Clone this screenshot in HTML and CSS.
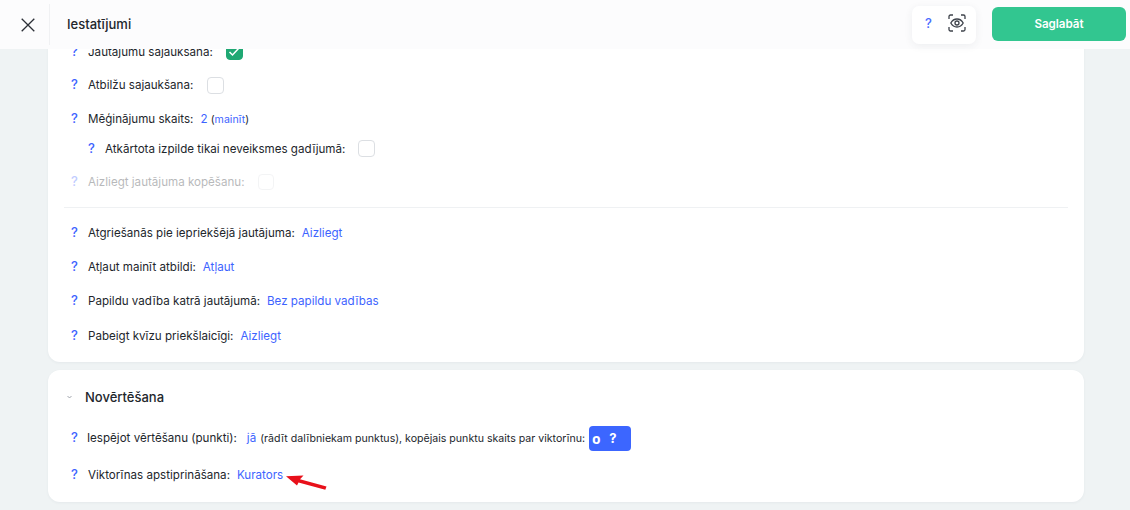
FILE: index.html
```html
<!DOCTYPE html>
<html lang="lv">
<head>
<meta charset="utf-8">
<title>Iestatījumi</title>
<link rel="stylesheet" href="styles.css">
</head>
<body>
<header class="topbar">
  <button class="close" aria-label="Aizvērt">
    <svg width="14" height="14" viewBox="0 0 14 14"><path d="M.7 .7l12.600 12.600M13.300 .7L.7 13.300" stroke="#2b2f36" stroke-width="1.300" fill="none"/></svg>
  </button>
  <div class="title">Iestatījumi</div>
  <div class="tools">
    <span class="q">?</span>
    <svg width="18" height="18" viewBox="0 0 18 18" fill="none" stroke="#3e434b" stroke-width="1.300"><path d="M1 5V2.500A1.500 1.500 0 0 1 2.500 1H5M13 1h2.500A1.500 1.500 0 0 1 17 2.500V5M17 13v2.500a1.500 1.500 0 0 1-1.500 1.500H13M5 17H2.500A1.500 1.500 0 0 1 1 15.500V13"/><path d="M2.800 9C4.300 6.300 6.500 5 9 5s4.700 1.300 6.200 4c-1.500 2.700-3.700 4-6.200 4S4.300 11.700 2.800 9z"/><circle cx="9" cy="9" r="2"/></svg>
  </div>
  <button class="save">Saglabāt</button>
</header>
<main class="content">
  <section class="card card-settings">
    <div class="row row-first"><span class="q">?</span><span>Jautājumu sajaukšana:</span><span class="check on"><svg width="12" height="10" viewBox="0 0 12 10"><path d="M1.500 5l3 3 6-6.500" stroke="#fff" stroke-width="1.500" fill="none"/></svg></span></div>
    <div class="row"><span class="q">?</span><span>Atbilžu sajaukšana:</span><span class="check check-wide"></span></div>
    <div class="row row-tries"><span class="q">?</span><span>Mēģinājumu skaits:</span><span><a class="link">2</a> <span class="small">(<a class="link">mainīt</a>)</span></span></div>
    <div class="row row-sub"><span class="q">?</span><span>Atkārtota izpilde tikai neveiksmes gadījumā:</span><span class="check"></span></div>
    <div class="row row-disabled"><span class="q">?</span><span>Aizliegt jautājuma kopēšanu:</span><span class="check check-small"></span></div>
    <hr class="divider">
    <div class="row"><span class="q">?</span><span>Atgriešanās pie iepriekšējā jautājuma:</span><a class="link">Aizliegt</a></div>
    <div class="row"><span class="q">?</span><span>Atļaut mainīt atbildi:</span><a class="link">Atļaut</a></div>
    <div class="row"><span class="q">?</span><span>Papildu vadība katrā jautājumā:</span><a class="link">Bez papildu vadības</a></div>
    <div class="row row-end"><span class="q">?</span><span>Pabeigt kvīzu priekšlaicīgi:</span><a class="link">Aizliegt</a></div>
  </section>
  <section class="card card-grading">
    <div class="section-head"><svg class="chev" width="5" height="4" viewBox="0 0 5 4"><path d="M.5 1l2 2 2-2" stroke="#8a9099" fill="none" stroke-width=".8"/></svg><h2>Novērtēšana</h2></div>
    <div class="row row-points"><span class="q">?</span><span>Iespējot vērtēšanu (punkti):</span><a class="link">jā</a><span class="small-text">(rādīt dalībniekam punktus), kopējais punktu skaits par viktorīnu:</span><span class="points"><b class="zero">0</b><b>?</b></span></div>
    <div class="row row-last"><span class="q">?</span><span>Viktorīnas apstiprināšana:</span><a class="link">Kurators</a>
      <svg class="arrow" width="41" height="16" viewBox="0 0 41 16"><path d="M0 1.200L17.500 .5 14 4.200 40.500 11.500 39.300 14.800 12.500 7.600 11 10.500z" fill="#e8101a"/></svg>
    </div>
  </section>
</main>
</body>
</html>
```
FILE: styles.css
```css
* { box-sizing: border-box; }
html, body { margin: 0; height: 510px; overflow: hidden; }
body {
  background: #eff3f4;
  font-family: Inter, "Noto Sans", sans-serif;
  font-size: 11.600px;
  color: #22262c;
  display: flex;
  flex-direction: column;
}
.topbar {
  height: 49px;
  flex: none;
  background: #fcfcfd;
  display: flex;
  align-items: center;
  position: relative;
  z-index: 1;
}
.close {
  width: 50px;
  height: 41px;
  padding: 0 0 0 7px;
  background: none;
  border: 0;
  border-right: 1px solid #f0f1f3;
  display: flex;
  align-items: center;
  justify-content: center;
}
.title { margin: 0 0 1px 17px; font-size: 13px; font-weight: 500; flex: 1; }
.tools {
  width: 64px;
  height: 38px;
  background: #fff;
  border-radius: 7px;
  box-shadow: 0 2px 8px rgba(40, 50, 70, .07);
  display: flex;
  align-items: center;
  gap: 16px;
  padding: 0 0 3px 13px;
}
.tools .q { width: auto; margin: 0; font-size: 13px; font-weight: 500; color: #4a6cff; }
.save {
  width: 134px;
  height: 34px;
  margin: 0 4px 1px 16px;
  border: 0;
  border-radius: 6px;
  background: #32c690;
  color: #fff;
  font: 600 11.600px Inter, sans-serif;
}
.content { flex: 1; overflow: hidden; padding: 0 46px 0 48px; }
.card {
  background: #fff;
  border-radius: 12px;
  box-shadow: 0 1px 3px rgba(40, 50, 70, .05);
}
.card-settings { margin-top: -14px; padding: 0 16px; height: 327px; border-radius: 0 0 12px 12px; }
.card-grading { margin-top: 8px; height: 132px; padding: 0 16px; }
.row { display: flex; align-items: center; height: 34px; gap: 7px; white-space: nowrap; }
.row-first { height: 33px; }
.row-tries { height: 33px; }
.row-sub { height: 27px; padding-left: 17px; }
.row-disabled { margin-top: 3px; opacity: .32; }
.row-end { margin-top: 1px; }
.q { width: 10px; margin-left: 7px; margin-top: -2px; color: #3d63ff; font-weight: 500; font-size: 13px; }
.check {
  width: 17px;
  height: 17px;
  margin-left: 6px;
  border: 1px solid #dcdfe3;
  border-radius: 4px;
  background: #fff;
  display: flex;
  align-items: center;
  justify-content: center;
}
.check-wide { margin-left: 7px; }
.check-small { width: 16px; height: 16px; }
.check.on { background: #1fa873; border-color: #1fa873; }
.link { color: #3d63ff; }
.small { font-size: 10.600px; }
.divider { margin: 8px 0; height: 1px; border: 0; background: #eff1f3; }
.section-head { display: flex; align-items: center; height: 54px; padding-left: 3px; }
.chev { margin-right: 13px; }
h2 { margin: 0; font-size: 13px; font-weight: 500; }
.row-points { margin-top: -3px; gap: 6px; }
.row-points .link { margin-left: 4px; }
.small-text { font-size: 10.600px; margin-left: -2px; margin-right: -2px; }
.points {
  width: 42px;
  height: 25px;
  padding-left: 3px;
  border-radius: 4px;
  background: #3c66ff;
  color: #fff;
  display: flex;
  align-items: center;
  gap: 9px;
  font-size: 13px;
}
.zero { font-family: "Open Sans", sans-serif; font-size: 14px; font-variant-numeric: oldstyle-nums; }
.row-last { margin-top: 3px; }
.arrow { margin: 8px 0 -8px -4px; }
```
